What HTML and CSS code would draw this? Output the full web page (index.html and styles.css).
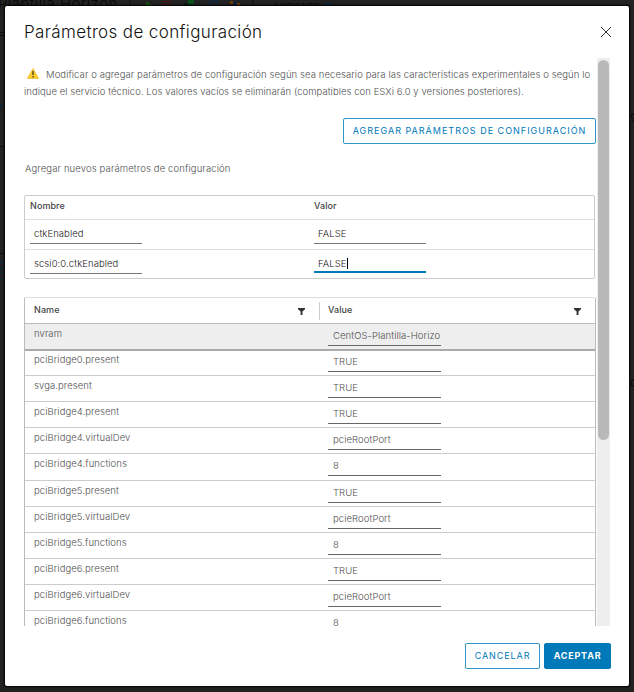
FILE: index.html
```
<!DOCTYPE html>
<html lang="es">
<head>
<meta charset="utf-8">
<title>Parámetros de configuración</title>
<link rel="stylesheet" href="styles.css">
</head>
<body>
<div class="backdrop">
  <div class="toolbar">
    <span class="vm-name">Plantilla Horizon</span>
    <svg class="tools" width="290" height="14" viewBox="0 0 290 14">
      <path d="M1 0V14M124 0V14" stroke="#111"/>
      <path d="M17 1L25 6L17 11Z" fill="#124d0b"/>
      <path d="M33 1h9v1h-9zM33 4h9v1h-9z" fill="#4a1111"/>
      <path d="M55 3h8v4h-8z" fill="#07210f"/><path d="M59 0h6v4h-6z" fill="#08501a"/>
      <path d="M79 5v-2h3v-2h6v4" fill="none" stroke="#0d2a50"/>
      <path d="M101 1h3v3h-3zM107 3h4v3h-4z" fill="#6b3a05"/><path d="M104 2h4v4h-4z" fill="#0b2340"/>
      <path d="M195 2l4 4 4-4" fill="none" stroke="#06283b" stroke-width="1.5"/>
    </svg>
    <span class="actions">ACCIONES</span>
  </div>
  <svg class="edges" width="634" height="692" viewBox="0 0 634 692"><path d="M0 32.5H4M0 35.5H4M0 146.5H4M0 253.5H4M632 121h2" stroke="#0d0d0d"/><path d="M0 262.5H4M0 278.5H4M0 267.5H3M1.5 267V274M1 103v6" stroke="#06263a"/><path d="M634 114a2.5 2.5 0 1 0 0 5M634 380a3 3 0 1 0 0 6" fill="none" stroke="#080808"/></svg>
</div>
<main class="modal">
  <header class="modal-head">
    <h1>Parámetros de configuración</h1>
    <svg class="close" width="12" height="12" viewBox="0 0 12 12"><path d="M1 1L11 11M11 1L1 11"/></svg>
  </header>
  <div class="scroll-area">
    <div class="content">
      <p class="notice"><svg class="warn" width="12" height="11" viewBox="0 0 12 11"><path d="M6 .4L11.7 10.5H.3Z" fill="#fdcf2d" stroke="#edb521" stroke-width=".6"/><path d="M6 3V7M6 8V9.4" stroke="#433c2a" stroke-width="1.3"/></svg><span class="line1">Modificar o agregar parámetros de configuración según sea necesario para las características experimentales o según lo</span><br><span class="line2">indique el servicio técnico. Los valores vacíos se eliminarán (compatibles con ESXi 6.0 y versiones posteriores).</span></p>
      <div class="add-row"><button class="btn add">AGREGAR PARÁMETROS DE CONFIGURACIÓN</button></div>
      <p class="subtitle">Agregar nuevos parámetros de configuración</p>
      <section class="new-params">
        <div class="new-row new-head"><b>Nombre</b><b>Valor</b></div>
        <div class="new-row"><span class="field">ctkEnabled</span><span class="field">FALSE</span></div>
        <div class="new-row"><span class="field">scsi0:0.ctkEnabled</span><span class="field focus">FALSE<i class="caret"></i></span></div>
      </section>
      <section class="grid">
        <div class="grid-head">
          <div class="col"><b>Name</b><svg class="filter" width="7" height="7" viewBox="0 0 7 7"><path d="M0 0H7V1.2L4.5 3.6V7H2.6V3.6L0 1.2Z"/></svg></div>
          <div class="col second"><b>Value</b><svg class="filter" width="7" height="7" viewBox="0 0 7 7"><path d="M0 0H7V1.2L4.5 3.6V7H2.6V3.6L0 1.2Z"/></svg></div>
        </div>
        <div class="grid-row selected"><span class="key">nvram</span><span class="field">CentOS-Plantilla-Horizo</span></div>
        <div class="grid-row"><span class="key">pciBridge0.present</span><span class="field">TRUE</span></div>
        <div class="grid-row"><span class="key">svga.present</span><span class="field">TRUE</span></div>
        <div class="grid-row"><span class="key">pciBridge4.present</span><span class="field">TRUE</span></div>
        <div class="grid-row"><span class="key">pciBridge4.virtualDev</span><span class="field">pcieRootPort</span></div>
        <div class="grid-row"><span class="key">pciBridge4.functions</span><span class="field">8</span></div>
        <div class="grid-row"><span class="key">pciBridge5.present</span><span class="field">TRUE</span></div>
        <div class="grid-row"><span class="key">pciBridge5.virtualDev</span><span class="field">pcieRootPort</span></div>
        <div class="grid-row"><span class="key">pciBridge5.functions</span><span class="field">8</span></div>
        <div class="grid-row"><span class="key">pciBridge6.present</span><span class="field">TRUE</span></div>
        <div class="grid-row"><span class="key">pciBridge6.virtualDev</span><span class="field">pcieRootPort</span></div>
        <div class="grid-row"><span class="key">pciBridge6.functions</span><span class="field">8</span></div>
      </section>
    </div>
    <div class="track"><div class="thumb"></div></div>
  </div>
  <footer><button class="btn cancel">CANCELAR</button><button class="btn accept">ACEPTAR</button></footer>
</main>
</body>
</html>
```

FILE: styles.css
```
* { box-sizing: border-box; }
body { margin: 0; width: 634px; height: 692px; overflow: hidden; background: #222; padding: 6px 0 0 5px; font: 300 9.5px/13px Inter, "Open Sans", sans-serif; letter-spacing: .08px; color: #505050; }
h1, p { margin: 0; font-weight: 300; }
b { font-weight: 500; }
.backdrop { position: absolute; inset: 0; overflow: hidden; }
.edges { position: absolute; left: 0; top: 0; }
.toolbar { position: absolute; left: -2px; top: -4px; height: 14px; color: #090909; }
.vm-name { position: absolute; left: 0; top: -1px; font-size: 15px; line-height: 18px; letter-spacing: .45px; white-space: nowrap; }
.tools { position: absolute; left: 131px; top: 4px; }
.actions { position: absolute; left: 275px; top: 5px; font-size: 9px; font-weight: 400; line-height: 12px; }
.modal { position: relative; width: 624px; height: 680px; background: #fff; border-radius: 2px; box-shadow: 0 0 2px 1px #000; display: flex; flex-direction: column; }
.modal-head { height: 52px; padding: 13px 17px 0 19px; display: flex; justify-content: space-between; align-items: flex-start; }
h1 { font-size: 17px; line-height: 26px; letter-spacing: .38px; color: #111; white-space: nowrap; }
.close { margin-top: 7px; stroke: #333; stroke-width: 1; fill: none; }
.scroll-area { height: 568px; display: flex; overflow: hidden; }
.content { width: 592px; padding-left: 19px; flex: none; }
.notice { height: 60px; padding-top: 8px; line-height: 17px; white-space: nowrap; }
.line1 { letter-spacing: .085px; }
.line2 { letter-spacing: .06px; }
.warn { margin: 0 7px 0 3px; vertical-align: -1px; }
.add-row { display: flex; justify-content: flex-end; padding-right: 1px; }
.btn { font: 500 9px/12px Inter, sans-serif; border: 1px solid #3097c9; border-radius: 2px; background: #fff; color: #0079b8; height: 26px; padding: 0; white-space: nowrap; }
.add { width: 253px; height: 26px; letter-spacing: 1px; font-weight: 400; }
.subtitle { margin-top: 17px; height: 34px; padding-left: 1px; line-height: 16px; letter-spacing: .13px; }
.new-params { width: 571px; height: 84px; border: 1px solid #ccc; border-radius: 2px; }
.new-row { height: 30px; display: grid; grid-template-columns: 284px 1fr; padding-left: 5px; border-top: 1px solid #ddd; }
.new-head { height: 23px; border: 0; padding-top: 4px; font-size: 9px; line-height: 12px; color: #444; }
.field { width: 113px; height: 17px; border-bottom: 1px solid #777; padding-left: 5px; line-height: 14px; white-space: nowrap; overflow: hidden; }
.new-row .field { width: 112px; margin-top: 7px; padding-left: 4px; color: #222; }
.new-row .focus { height: 16px; border-bottom: 2px solid #0079b8; }
.caret { display: inline-block; width: 1px; height: 11px; background: #000; vertical-align: -2px; }
.grid { margin-top: 18px; width: 572px; border: 1px solid #bbb; border-top-color: #ddd; border-radius: 2px 2px 0 0; }
.grid-head { height: 25px; display: flex; font-size: 9px; color: #444; }
.col { width: 294px; display: flex; justify-content: space-between; padding: 5px 14px 0 9px; }
.second { width: 276px; margin-top: 4px; height: 18px; padding: 1px 14px 0 8px; border-left: 1px solid #ccc; }
.filter { margin-top: 5px; fill: #333; }
.grid-row { height: 26.1px; border-top: 1px solid #ccc; display: grid; grid-template-columns: 303px 1fr; }
.key { padding: 3px 0 0 9px; line-height: 14px; }
.grid-row .field { margin-top: 5px; border-color: #666; }
.selected { background: #eee; border-color: #bbb; border-bottom: 2px solid #aaa; height: 28px; }
.selected + .grid-row { border-top: 0; height: 24.2px; }
.selected + .grid-row .key { padding-top: 2px; }
.selected + .grid-row .field { margin-top: 4px; }
.track { width: 13px; height: 568px; background: #eee; padding: 2px 1px; }
.thumb { width: 11px; height: 380px; border-radius: 6px; background: #b9b9b9; }
footer { display: flex; justify-content: flex-end; gap: 4px; padding: 17px 18px 0 0; }
.cancel { width: 75px; letter-spacing: .9px; font-weight: 400; }
.accept { width: 67px; letter-spacing: .8px; font-weight: 700; color: #fff; background: #0079b8; border-color: #0079b8; }
```
